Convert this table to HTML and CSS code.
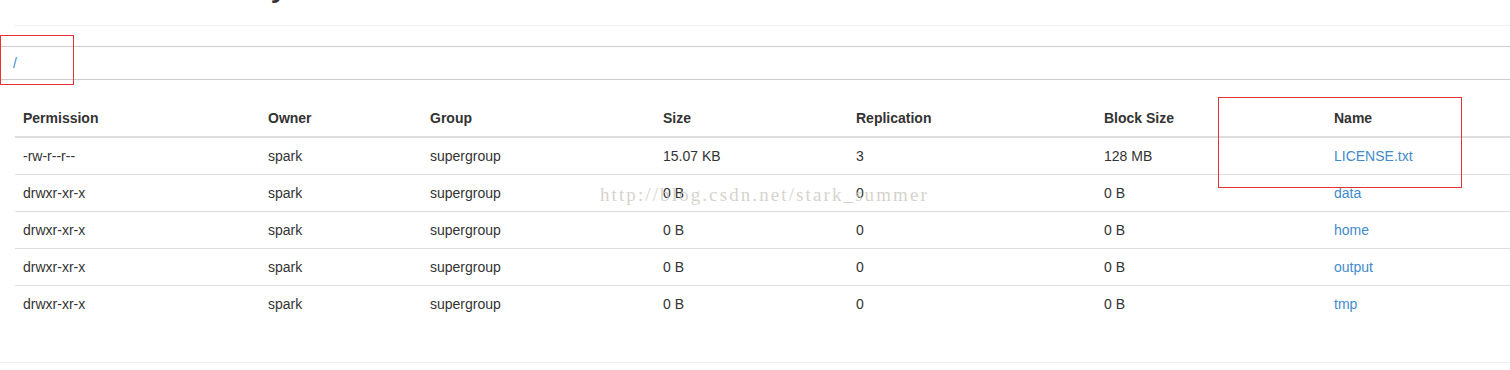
FILE: index.html
```html
<!DOCTYPE html>
<html lang="en">
<head>
    <meta charset="UTF-8">
    <title>Browsing HDFS</title>
    <link rel="stylesheet" href="styles.css">
</head>
<body>
    <div class="container">
        <div class="page-header">
            <h1>Browse Directory</h1>
        </div>
        <div class="crumbs">
            <a href="#">/</a>
        </div>
        <table class="listing">
            <colgroup>
                <col class="c-perm">
                <col class="c-owner">
                <col class="c-group">
                <col class="c-size">
                <col class="c-repl">
                <col class="c-block">
                <col class="c-name">
            </colgroup>
            <thead>
                <tr>
                    <th>Permission</th>
                    <th>Owner</th>
                    <th>Group</th>
                    <th>Size</th>
                    <th>Replication</th>
                    <th>Block Size</th>
                    <th>Name</th>
                </tr>
            </thead>
            <tbody>
                <tr>
                    <td>-rw-r--r--</td>
                    <td>spark</td>
                    <td>supergroup</td>
                    <td>15.07 KB</td>
                    <td>3</td>
                    <td>128 MB</td>
                    <td><a href="#">LICENSE.txt</a></td>
                </tr>
                <tr>
                    <td>drwxr-xr-x</td>
                    <td>spark</td>
                    <td>supergroup</td>
                    <td>0 B</td>
                    <td>0</td>
                    <td>0 B</td>
                    <td><a href="#">data</a></td>
                </tr>
                <tr>
                    <td>drwxr-xr-x</td>
                    <td>spark</td>
                    <td>supergroup</td>
                    <td>0 B</td>
                    <td>0</td>
                    <td>0 B</td>
                    <td><a href="#">home</a></td>
                </tr>
                <tr>
                    <td>drwxr-xr-x</td>
                    <td>spark</td>
                    <td>supergroup</td>
                    <td>0 B</td>
                    <td>0</td>
                    <td>0 B</td>
                    <td><a href="#">output</a></td>
                </tr>
                <tr>
                    <td>drwxr-xr-x</td>
                    <td>spark</td>
                    <td>supergroup</td>
                    <td>0 B</td>
                    <td>0</td>
                    <td>0 B</td>
                    <td><a href="#">tmp</a></td>
                </tr>
            </tbody>
        </table>
    </div>
    <hr class="footer-rule">

    <div class="watermark">http://blog.csdn.net/stark_summer</div>
    <div class="mark mark-path"></div>
    <div class="mark mark-name"></div>
</body>
</html>
```

FILE: styles.css
```css
body {
    margin: 0;
    font-family: 'Liberation Sans', Arial, sans-serif;
    font-size: 14px;
    line-height: 20px;
    color: #333333;
    background-color: #ffffff;
    position: relative;
    overflow: hidden;
}
a {
    color: #428bca;
    text-decoration: none;
}
.container {
    padding-left: 15px;
}
.page-header {
    margin-top: -37px;
    padding-bottom: 12px;
    border-bottom: 1px solid #eeeeee;
}
.page-header h1 {
    margin: 0 0 10px;
    font-size: 36px;
    line-height: 40px;
    font-weight: 500;
}
.crumbs {
    margin: 20px 0 0 -15px;
    height: 32px;
    line-height: 32px;
    padding-left: 13px;
    border-top: 1px solid #cccccc;
    border-bottom: 1px solid #cccccc;
}
.listing {
    width: 100%;
    margin-top: 20px;
    border-collapse: collapse;
    border-spacing: 0;
    table-layout: fixed;
}
.c-perm { width: 245px; }
.c-owner { width: 162px; }
.c-group { width: 233px; }
.c-size { width: 193px; }
.c-repl { width: 248px; }
.c-block { width: 230px; }
.listing th,
.listing td {
    padding: 8px;
    text-align: left;
    line-height: 20px;
    white-space: nowrap;
}
.listing th {
    font-weight: bold;
    border-bottom: 2px solid #dddddd;
}
.listing td {
    border-top: 1px solid #dddddd;
}
.footer-rule {
    margin: 40px 0 0;
    border: 0;
    border-top: 1px solid #eeeeee;
}
.watermark {
    position: absolute;
    left: 600px;
    top: 185px;
    font-family: 'Liberation Serif', serif;
    font-size: 19px;
    letter-spacing: 2.1px;
    color: rgba(200, 196, 188, 0.75);
    pointer-events: none;
}
.mark {
    position: absolute;
    box-sizing: border-box;
    border: 1px solid #e53333;
}
.mark-path {
    left: 0;
    top: 35px;
    width: 74px;
    height: 50px;
}
.mark-name {
    left: 1218px;
    top: 97px;
    width: 244px;
    height: 91px;
}
```
